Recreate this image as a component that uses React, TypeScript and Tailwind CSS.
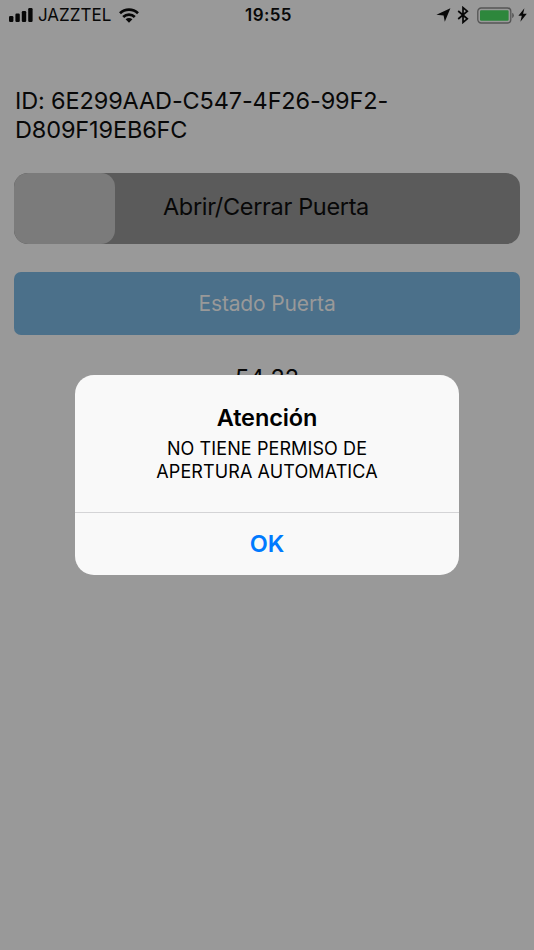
import React from 'react';

const StatusBar: React.FC = () => (
  <header className="relative flex h-[30px] items-center justify-between pl-[9px] pr-[7px] text-[17px] leading-[30px]">
    <div className="flex items-center">
      <svg width="24" height="14" viewBox="0 0 24 14" fill="currentColor">
        <rect x="0" y="8" width="4.4" height="6" rx="1.2" />
        <rect x="6.4" y="5.5" width="4.4" height="8.5" rx="1.2" />
        <rect x="12.8" y="3" width="4.4" height="11" rx="1.2" />
        <rect x="19.2" y="0" width="4.4" height="14" rx="1.2" />
      </svg>
      <span className="ml-[5px] w-[73px] whitespace-nowrap">JAZZTEL</span>
      <svg className="ml-2" width="20" height="15" viewBox="0 0 20 15" fill="none" stroke="currentColor" strokeWidth="2.7">
        <path d="M1 5.3 a12.9 12.9 0 0 1 18 0" />
        <path d="M4.2 9 a8.2 8.2 0 0 1 11.6 0" />
        <path d="M10 14.7 L6.6 11.3 a4.9 4.9 0 0 1 6.8 0 Z" fill="currentColor" stroke="none" />
      </svg>
    </div>

    <span className="absolute left-0 right-0 top-0 pl-[3px] text-center font-semibold tracking-[0.4px]">19:55</span>

    <div className="flex items-center">
      <svg width="15" height="14" viewBox="0 0 15 14" fill="currentColor">
        <path d="M14.4 0.2 L8.8 13.8 L7.6 7.6 L0.4 6.8 Z" />
      </svg>
      <svg className="ml-[6px]" width="12" height="18" viewBox="0 0 12 18" fill="none" stroke="currentColor" strokeWidth="1.7">
        <path d="M1.2 5 L10.3 12.8 L6 16.4 V1.6 L10.3 5.2 L1.2 13" />
      </svg>
      <svg className="ml-[8px]" width="38" height="17" viewBox="0 0 38 17">
        <rect x="0.8" y="1" width="33" height="15" rx="3.4" fill="none" stroke="#555" strokeWidth="1.3" />
        <rect x="3" y="3.2" width="28.6" height="10.6" rx="1.2" fill="#2d873c" />
        <path d="M35.2 5.8 a3 3 0 0 1 0 5.4 Z" fill="#555" />
      </svg>
      <svg className="ml-[3px]" width="9" height="14" viewBox="0 0 9 14" fill="currentColor">
        <path d="M6.4 0.2 L0.4 7.8 H3.8 L2.4 13.8 L8.8 5.8 H5.1 Z" />
      </svg>
    </div>
  </header>
);

const SlideToOpen: React.FC = () => (
  <div className="relative mt-[29px] flex h-[71px] items-center justify-center overflow-hidden rounded-[14px] bg-[#5b5b5b]">
    <div className="absolute inset-y-0 left-0 w-[101px] rounded-[14px] bg-[#7b7b7b]" />
    <span className="pb-[3px] pr-[2px] text-[23.5px] tracking-[-0.34px]">Abrir/Cerrar Puerta</span>
  </div>
);

const AlertDialog: React.FC = () => (
  <div
    role="alertdialog"
    className="absolute left-[75px] top-[375px] flex h-[200px] w-[384px] flex-col overflow-hidden rounded-[19px] bg-[#f9f9f9] text-center text-black"
  >
    <div className="flex-1 pt-[28px]">
      <h1 className="text-[23.5px] font-semibold leading-[30px] tracking-[-0.1px]">Atención</h1>
      <p className="mt-[4px] text-[18px] leading-[23px] tracking-[0.1px]">
        NO TIENE PERMISO DE
        <br />
        APERTURA AUTOMATICA
      </p>
    </div>
    <button className="h-[63px] border-t border-[#d4d4d6] text-[23.5px] font-semibold text-[#007aff]">OK</button>
  </div>
);

const App: React.FC = () => {
  return (
    <div className="relative h-[950px] w-[534px] overflow-hidden bg-[#999999] font-['Inter',sans-serif] text-[#080808]">
      <StatusBar />
      <main className="px-[14px] pt-[56px]">
        <p className="pl-px text-[23.5px] leading-[29px] tracking-[-0.14px]">
          ID: 6E299AAD-C547-4F26-99F2-
          <br />
          D809F19EB6FC
        </p>
        <SlideToOpen />
        <button className="mt-[28px] h-[63px] w-full rounded-[7px] bg-[#4b708a] text-[21px] tracking-[-0.14px] text-[#999999]">
          Estado Puerta
        </button>
        <p className="mt-[28px] text-center text-[23.5px] leading-[29px]">54.22</p>
      </main>
      <AlertDialog />
    </div>
  );
};

export default App;
